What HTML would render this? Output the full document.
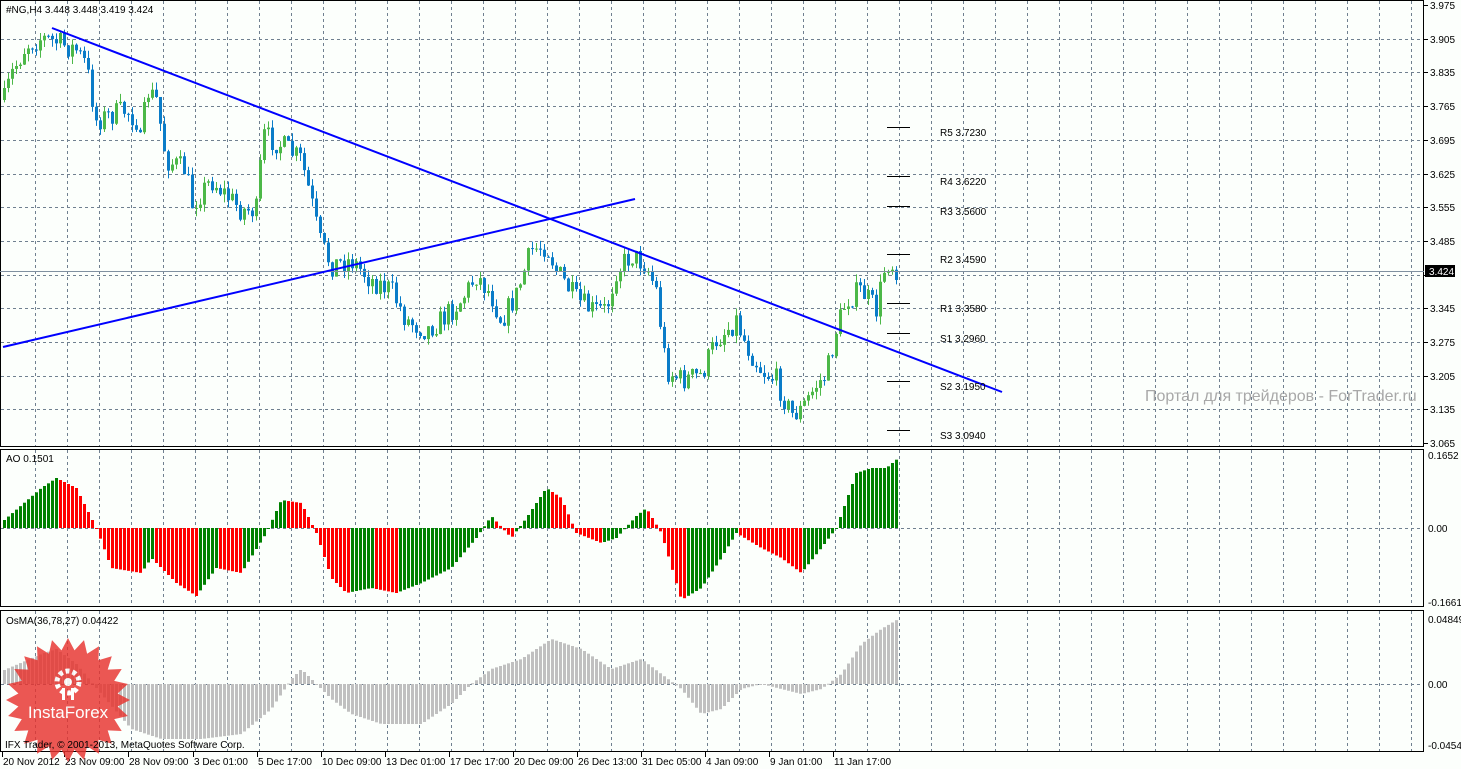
<!DOCTYPE html>
<html><head><meta charset="utf-8"><style>
body{margin:0;background:#fff;width:1461px;height:769px;overflow:hidden;font-family:"Liberation Sans","DejaVu Sans",sans-serif}
svg{display:block}
text{font-family:"Liberation Sans",sans-serif;font-size:10px;fill:#000}
</style></head><body>
<svg id="s" width="1461" height="769" xmlns="http://www.w3.org/2000/svg">
<rect width="1461" height="769" fill="#fcfffc"/>
<g id="grid" stroke="#708090" stroke-dasharray="3,3" stroke-width="1"></g>
<g id="bars"></g>
<g stroke="#000" fill="none" stroke-width="1">
<rect x="0.5" y="0.5" width="1423" height="446"/>
<rect x="0.5" y="449.5" width="1423" height="157"/>
<rect x="0.5" y="610.5" width="1423" height="141"/>
</g>
<line x1="0" y1="271.5" x2="1424" y2="271.5" stroke="#8090a0"/>
<line x1="3" y1="347" x2="635" y2="199" stroke="#0000ff" stroke-width="2"/>
<line x1="52" y1="28" x2="1002" y2="392" stroke="#0000ff" stroke-width="2"/>
<g stroke="#000">
<line x1="887" y1="127.5" x2="910" y2="127.5"/><line x1="887" y1="176.5" x2="910" y2="176.5"/>
<line x1="887" y1="206.5" x2="910" y2="206.5"/><line x1="887" y1="254.5" x2="910" y2="254.5"/>
<line x1="887" y1="303.5" x2="910" y2="303.5"/><line x1="887" y1="333.5" x2="910" y2="333.5"/>
<line x1="887" y1="381.5" x2="910" y2="381.5"/><line x1="887" y1="430.5" x2="910" y2="430.5"/>
</g>
<text x="940" y="136">R5 3.7230</text><text x="940" y="185">R4 3.6220</text>
<text x="940" y="215">R3 3.5600</text><text x="940" y="263">R2 3.4590</text>
<text x="940" y="312">R1 3.3580</text><text x="940" y="342">S1 3.2960</text>
<text x="940" y="390">S2 3.1950</text><text x="940" y="439">S3 3.0940</text>
<text x="1145" y="401" style="font-size:16px;fill:#a8a8a8">Портал для трейдеров - ForTrader.ru</text>
<text x="6" y="13">#NG,H4  3.448 3.448 3.419 3.424</text>
<text x="6" y="462">AO 0.1501</text>
<text x="6" y="624">OsMA(36,78,27) 0.04422</text>
<g id="axis"></g>
<rect x="1425" y="265" width="30" height="12" fill="#000"/>
<text x="1429" y="275" style="fill:#fff">3.424</text>
<g opacity="0.82">
<polygon id="star" fill="#e8332e"/>
<g fill="#fff" transform="translate(68,686)">
<circle cx="0" cy="-4" r="11" fill="none" stroke="#fff" stroke-width="5" stroke-dasharray="4,3"/>
<circle cx="0" cy="-4" r="4"/><rect x="-6" y="2" width="3" height="12"/><rect x="3" y="2" width="3" height="12"/>
</g>
<text x="68" y="718" text-anchor="middle" style="font-size:17px;fill:#fff">InstaForex</text>
</g>
<text x="5" y="748">IFX Trader, © 2001-2013, MetaQuotes Software Corp.</text>
</svg>
<script>
var NS="http://www.w3.org/2000/svg",S=document.getElementById('s');
function el(p,t,a){var e=document.createElementNS(NS,t);for(var k in a)e.setAttribute(k,a[k]);p.appendChild(e);return e;}
var g=document.getElementById('grid');
for(var x=35;x<1420;x+=32){el(g,'line',{x1:x+.5,y1:1,x2:x+.5,y2:446});el(g,'line',{x1:x+.5,y1:450,x2:x+.5,y2:606});el(g,'line',{x1:x+.5,y1:611,x2:x+.5,y2:751});}
var ax=document.getElementById('axis');
var labs=["3.975","3.905","3.835","3.765","3.695","3.625","3.555","3.485","3.415","3.345","3.275","3.205","3.135","3.065"];
for(var i=0;i<labs.length;i++){var y=Math.round(5+i*33.7);if(i>0&&i<13)el(g,'line',{x1:1,y1:y+.5,x2:1423,y2:y+.5});el(ax,'line',{x1:1424,y1:y+.5,x2:1428,y2:y+.5,stroke:'#000'});if(i!=8){var t=el(ax,'text',{x:1430,y:y+4});t.textContent=labs[i];}}
el(g,'line',{x1:1,y1:528.5,x2:1423,y2:528.5});el(g,'line',{x1:1,y1:684.5,x2:1423,y2:684.5});
[["0.1652",455],["0.00",528],["-0.1661",602],["0.04849",619],["0.00",684],["-0.04549",745]].forEach(function(a){var t=el(ax,'text',{x:1428,y:a[1]+4});t.textContent=a[0];});
var tl=[["20 Nov 2012",3],["23 Nov 09:00",65],["28 Nov 09:00",129],["3 Dec 01:00",194],["5 Dec 17:00",258],["10 Dec 09:00",322],["13 Dec 01:00",386],["17 Dec 17:00",450],["20 Dec 09:00",514],["26 Dec 13:00",578],["31 Dec 05:00",642],["4 Jan 09:00",706],["9 Jan 01:00",770],["11 Jan 17:00",834]];
tl.forEach(function(a){var t=el(ax,'text',{x:a[1],y:765});t.textContent=a[0];el(ax,'line',{x1:a[1]-1+.5,y1:752,x2:a[1]-1+.5,y2:757,stroke:'#000'});});
function interp(kp,x){for(var i=0;i<kp.length-1;i+=2){if(x<=kp[i+2]){var f=(x-kp[i])/(kp[i+2]-kp[i]);return kp[i+1]+(kp[i+3]-kp[i+1])*f;}}return kp[kp.length-1];}
var seed=7;function rnd(){seed=(seed*16807)%2147483647;return seed/2147483647;}
var P=[3,100,10,75,25,45,40,38,55,42,75,50,85,65,95,120,110,115,125,110,135,120,140,150,145,90,155,100,165,160,185,170,190,205,210,180,225,195,240,210,255,210,262,135,280,145,300,160,310,200,318,240,330,265,350,260,370,280,390,290,405,320,425,330,440,320,460,300,475,275,490,295,500,320,515,295,530,250,545,245,555,270,575,300,590,310,605,310,615,270,630,255,645,265,655,290,665,370,680,380,700,375,715,340,735,320,745,345,760,370,775,380,790,415,800,410,815,385,825,375,835,330,845,300,860,290,875,310,885,260,897,270];
var b=document.getElementById('bars');var prev=interp(P,3);
for(var x=3;x<=897;x+=4){var c=interp(P,x)+(rnd()-.5)*24;var o=prev;var hi=Math.min(o,c)-rnd()*8,lo=Math.max(o,c)+rnd()*8;var col=c<o?'#4cb848':'#0a7cc8';
el(b,'line',{x1:x+1.5,y1:hi,x2:x+1.5,y2:lo,stroke:col});el(b,'rect',{x:x,y:Math.min(o,c),width:3,height:Math.max(1,Math.abs(c-o)),fill:col});prev=c;}
var A=[3,8,40,40,55,50,75,40,95,0,110,-40,140,-45,150,-30,175,-55,195,-68,215,-40,240,-45,265,-5,280,28,300,25,315,-5,330,-50,345,-65,370,-60,395,-65,420,-55,450,-40,475,-10,490,12,510,-10,525,10,545,40,560,30,575,-5,600,-15,615,-10,635,12,645,20,660,-5,680,-72,700,-60,720,-30,735,-5,760,-20,780,-30,800,-45,820,-20,835,0,855,55,870,60,885,60,897,70];
var pa=null;for(var x=3;x<=897;x+=4){var v=interp(A,x);var col=(pa===null||v>=pa)?'#008000':'#ff0000';var y0=528,y1=528-v;el(b,'rect',{x:x,y:Math.min(y0,y1),width:3,height:Math.max(1,Math.abs(v)),fill:col});pa=v;}
var O=[3,14,40,30,55,35,75,20,100,-10,130,-45,160,-55,200,-55,240,-50,270,-25,290,5,300,15,315,0,330,-15,350,-30,380,-40,420,-40,450,-20,470,0,490,15,520,25,550,45,580,35,610,15,640,25,660,10,680,-5,700,-30,720,-25,740,-5,760,0,780,-5,800,-10,820,-5,840,10,860,40,880,55,897,65];
for(var x=3;x<=897;x+=4){var v=interp(O,x);el(b,'rect',{x:x,y:Math.min(684,684-v),width:3,height:Math.max(1,Math.abs(v)),fill:'#c0c0c0'});}
var pts=[];for(var i=0;i<48;i++){var a=i*Math.PI/24,r=i%2?50:62;pts.push((68+r*Math.sin(a)).toFixed(1)+','+(700-r*Math.cos(a)).toFixed(1));}
document.getElementById('star').setAttribute('points',pts.join(' '));
</script>
</body></html>
